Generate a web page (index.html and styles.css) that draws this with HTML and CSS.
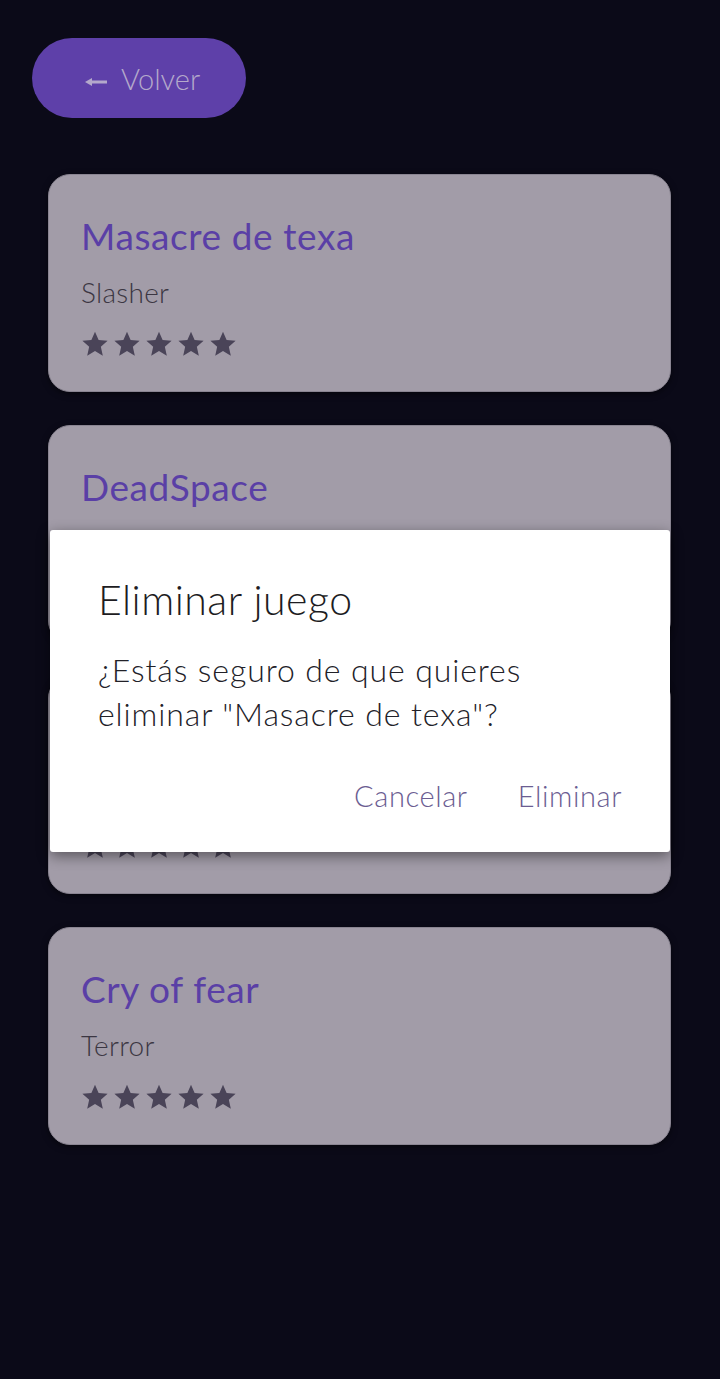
FILE: index.html
```html
<!DOCTYPE html>
<html lang="es">
<head>
<meta charset="utf-8">
<title>Juegos</title>
<link rel="stylesheet" href="styles.css">
</head>
<body>
<div class="screen">
  <header class="top">
    <button class="back">
      <svg class="back-arrow" width="22" height="10" viewBox="0 0 22 10"><path d="M0 5 L7 1 L7 3.6 L22 3.6 L22 6.4 L7 6.4 L7 9 Z" fill="currentColor"/></svg>
      <span>Volver</span>
    </button>
  </header>
  <main class="list">
    <article class="card">
      <h2 class="card-title">Masacre de texa</h2>
      <p class="card-genre">Slasher</p>
      <div class="stars">
        <svg viewBox="0 0 24 24"><path d="M12 1.5l3.1 7.1 7.7.7-5.8 5.1 1.7 7.6L12 18l-6.7 4 1.7-7.6L1.2 9.3l7.7-.7z"/></svg>
        <svg viewBox="0 0 24 24"><path d="M12 1.5l3.1 7.1 7.7.7-5.8 5.1 1.7 7.6L12 18l-6.7 4 1.7-7.6L1.2 9.3l7.7-.7z"/></svg>
        <svg viewBox="0 0 24 24"><path d="M12 1.5l3.1 7.1 7.7.7-5.8 5.1 1.7 7.6L12 18l-6.7 4 1.7-7.6L1.2 9.3l7.7-.7z"/></svg>
        <svg viewBox="0 0 24 24"><path d="M12 1.5l3.1 7.1 7.7.7-5.8 5.1 1.7 7.6L12 18l-6.7 4 1.7-7.6L1.2 9.3l7.7-.7z"/></svg>
        <svg viewBox="0 0 24 24"><path d="M12 1.5l3.1 7.1 7.7.7-5.8 5.1 1.7 7.6L12 18l-6.7 4 1.7-7.6L1.2 9.3l7.7-.7z"/></svg>
      </div>
    </article>
    <article class="card">
      <h2 class="card-title">DeadSpace</h2>
      <p class="card-genre">Survival horror</p>
      <div class="stars">
        <svg viewBox="0 0 24 24"><path d="M12 1.5l3.1 7.1 7.7.7-5.8 5.1 1.7 7.6L12 18l-6.7 4 1.7-7.6L1.2 9.3l7.7-.7z"/></svg>
        <svg viewBox="0 0 24 24"><path d="M12 1.5l3.1 7.1 7.7.7-5.8 5.1 1.7 7.6L12 18l-6.7 4 1.7-7.6L1.2 9.3l7.7-.7z"/></svg>
        <svg viewBox="0 0 24 24"><path d="M12 1.5l3.1 7.1 7.7.7-5.8 5.1 1.7 7.6L12 18l-6.7 4 1.7-7.6L1.2 9.3l7.7-.7z"/></svg>
        <svg viewBox="0 0 24 24"><path d="M12 1.5l3.1 7.1 7.7.7-5.8 5.1 1.7 7.6L12 18l-6.7 4 1.7-7.6L1.2 9.3l7.7-.7z"/></svg>
        <svg viewBox="0 0 24 24"><path d="M12 1.5l3.1 7.1 7.7.7-5.8 5.1 1.7 7.6L12 18l-6.7 4 1.7-7.6L1.2 9.3l7.7-.7z"/></svg>
      </div>
    </article>
    <article class="card">
      <h2 class="card-title">Outlast</h2>
      <p class="card-genre">Terror</p>
      <div class="stars">
        <svg viewBox="0 0 24 24"><path d="M12 1.5l3.1 7.1 7.7.7-5.8 5.1 1.7 7.6L12 18l-6.7 4 1.7-7.6L1.2 9.3l7.7-.7z"/></svg>
        <svg viewBox="0 0 24 24"><path d="M12 1.5l3.1 7.1 7.7.7-5.8 5.1 1.7 7.6L12 18l-6.7 4 1.7-7.6L1.2 9.3l7.7-.7z"/></svg>
        <svg viewBox="0 0 24 24"><path d="M12 1.5l3.1 7.1 7.7.7-5.8 5.1 1.7 7.6L12 18l-6.7 4 1.7-7.6L1.2 9.3l7.7-.7z"/></svg>
        <svg viewBox="0 0 24 24"><path d="M12 1.5l3.1 7.1 7.7.7-5.8 5.1 1.7 7.6L12 18l-6.7 4 1.7-7.6L1.2 9.3l7.7-.7z"/></svg>
        <svg viewBox="0 0 24 24"><path d="M12 1.5l3.1 7.1 7.7.7-5.8 5.1 1.7 7.6L12 18l-6.7 4 1.7-7.6L1.2 9.3l7.7-.7z"/></svg>
      </div>
    </article>
    <article class="card">
      <h2 class="card-title">Cry of fear</h2>
      <p class="card-genre">Terror</p>
      <div class="stars">
        <svg viewBox="0 0 24 24"><path d="M12 1.5l3.1 7.1 7.7.7-5.8 5.1 1.7 7.6L12 18l-6.7 4 1.7-7.6L1.2 9.3l7.7-.7z"/></svg>
        <svg viewBox="0 0 24 24"><path d="M12 1.5l3.1 7.1 7.7.7-5.8 5.1 1.7 7.6L12 18l-6.7 4 1.7-7.6L1.2 9.3l7.7-.7z"/></svg>
        <svg viewBox="0 0 24 24"><path d="M12 1.5l3.1 7.1 7.7.7-5.8 5.1 1.7 7.6L12 18l-6.7 4 1.7-7.6L1.2 9.3l7.7-.7z"/></svg>
        <svg viewBox="0 0 24 24"><path d="M12 1.5l3.1 7.1 7.7.7-5.8 5.1 1.7 7.6L12 18l-6.7 4 1.7-7.6L1.2 9.3l7.7-.7z"/></svg>
        <svg viewBox="0 0 24 24"><path d="M12 1.5l3.1 7.1 7.7.7-5.8 5.1 1.7 7.6L12 18l-6.7 4 1.7-7.6L1.2 9.3l7.7-.7z"/></svg>
      </div>
    </article>
  </main>

  <div class="dialog" role="dialog">
    <h3 class="dialog-title">Eliminar juego</h3>
    <p class="dialog-text">¿Estás seguro de que quieres eliminar "Masacre de texa"?</p>
    <div class="dialog-actions">
      <button class="dialog-btn">Cancelar</button>
      <button class="dialog-btn">Eliminar</button>
    </div>
  </div>
</div>
</body>
</html>
```

FILE: styles.css
```css
* { box-sizing: border-box; }
html, body {
  margin: 0;
  padding: 0;
  background: #0b0a18;
}
body {
  font-family: "Lato", "Open Sans", sans-serif;
  font-weight: 300;
  width: 720px;
  height: 1379px;
  overflow: hidden;
}
.screen {
  position: relative;
  width: 720px;
  height: 1379px;
  padding: 38px 0 0 0;
}
.top {
  padding-left: 32px;
}
.back {
  display: flex;
  align-items: center;
  gap: 14px;
  width: 214px;
  height: 80px;
  padding: 0 0 0 53px;
  border: none;
  border-radius: 40px;
  background: #5e40a9;
  color: #b4a9cb;
  font-family: inherit;
  font-weight: 300;
  font-size: 29px;
}
.back-arrow {
  margin-top: 8px;
  color: #b4a9cb;
}
.list {
  display: flex;
  flex-direction: column;
  gap: 33px;
  padding: 56px 49px 0 48px;
}
.card {
  height: 218px;
  border-radius: 22px;
  background: #a29ca8;
  border: 1.5px solid #8a8592;
  padding: 36px 32px 0 32px;
  box-shadow: 0 2px 6px rgba(0,0,0,0.5);
}
.card-title {
  margin: 0;
  font-weight: 400;
  font-size: 37px;
  letter-spacing: 0.6px;
  line-height: 50px;
  color: #5a3fa6;
}
.card-genre {
  margin: 14px 0 0;
  font-size: 28px;
  letter-spacing: 0.3px;
  line-height: 34px;
  color: #3b3642;
}
.stars {
  display: flex;
  gap: 4px;
  margin-top: 21px;
}
.stars svg {
  width: 28px;
  height: 28px;
  fill: #4a4458;
}
.dialog {
  position: absolute;
  left: 50px;
  top: 530px;
  width: 620px;
  height: 322px;
  background: #ffffff;
  border-radius: 3px;
  box-shadow: 0 4px 14px rgba(0,0,0,0.45);
  padding: 44px 48px 0 48px;
}
.dialog-title {
  margin: 0;
  font-weight: 300;
  font-size: 41px;
  letter-spacing: 0.5px;
  line-height: 52px;
  color: #1d1c22;
}
.dialog-text {
  margin: 22px 0 0;
  font-size: 32px;
  letter-spacing: 0.9px;
  line-height: 44px;
  color: #222128;
}
.dialog-actions {
  display: flex;
  justify-content: flex-end;
  gap: 50px;
  margin-top: 42px;
}
.dialog-btn {
  border: none;
  background: none;
  padding: 0;
  font-family: inherit;
  font-weight: 300;
  font-size: 29px;
  letter-spacing: 0.6px;
  color: #6b5d92;
}
```
